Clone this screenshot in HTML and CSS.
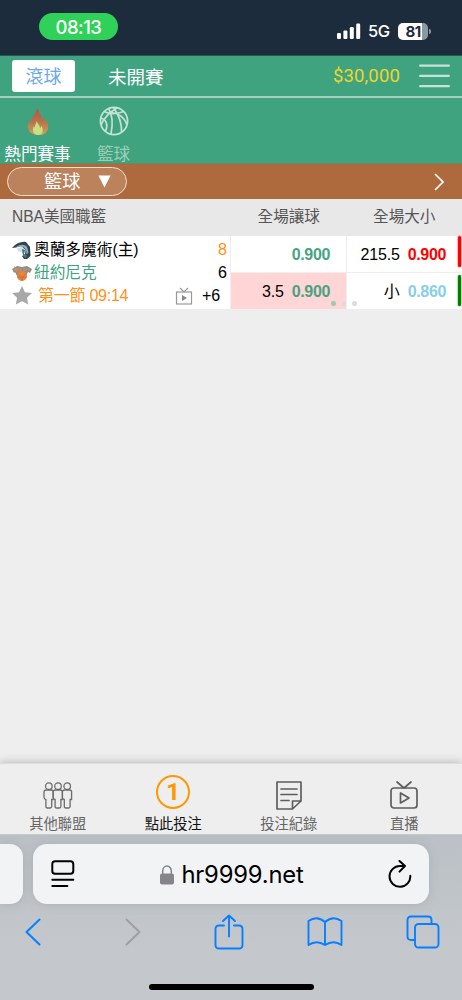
FILE: index.html
```html
<!DOCTYPE html>
<html lang="zh-Hant">
<head>
<meta charset="utf-8">
<meta name="viewport" content="width=device-width">
<title>滾球</title>
<link rel="stylesheet" href="styles.css">
</head>
<body>
<div class="phone">
  <div class="status">
    <div class="clock">08:13</div>
    <div class="status-right">
      <svg class="signal" viewBox="0 0 24 16" fill="#fff"><rect x="0" y="10" width="4" height="6" rx="1.2"/><rect x="6.4" y="7.4" width="4" height="8.6" rx="1.2"/><rect x="12.8" y="4" width="4" height="12" rx="1.2"/><rect x="19.2" y="0.5" width="4" height="15.5" rx="1.2"/></svg>
      <span class="network">5G</span>
      <div class="battery">81</div>
      <i class="battery-tip"></i>
    </div>
  </div>

  <header class="topbar">
    <div class="tab-live">滾球</div>
    <div class="tab-next">未開賽</div>
    <div class="balance">$30,000</div>
    <svg class="menu" viewBox="0 0 31 24" stroke="#c9e2d9" stroke-width="2.300" stroke-linecap="round"><path d="M1.200 1.700h28.600M1.200 11.900h28.600M1.200 22.200h28.600"/></svg>
  </header>

  <nav class="sports">
    <div class="sport sport-hot">
      <svg class="flame" viewBox="0 0 22 30">
        <defs>
          <linearGradient id="fire" x1="0" y1="0" x2="0" y2="1"><stop offset="0" stop-color="#b8503f"/><stop offset=".5" stop-color="#bb704a"/><stop offset="1" stop-color="#c6a45c"/></linearGradient>
        </defs>
        <path fill="url(#fire)" d="M10 0C11 4 14.500 7 14.500 13c1-1 1.800-2 2-3.500 1.500 2 1.500 4 1.700 6.500.9-.6 1.400-1.500 1.700-2.500C23 20 22 29 12 29 1 29-1.500 21 1.800 14.500c.4 1.200.9 1.800 1.600 2.200C3.400 10 10 8 10 0Z"/>
        <path fill="#c9df82" d="M9.500 14.500c.8 2.700 3.300 4 3.700 7.500l1.500-2.500C17 24 16 29 11.500 29 6 29 4.800 24.500 6.500 20l1 1.500c.2-3 1.700-4 2-7Z"/>
      </svg>
      <span>熱門賽事</span>
    </div>
    <div class="sport sport-ball">
      <svg class="ball" viewBox="0 0 30 30" fill="none" stroke="#c5e2d5" stroke-width="1.700"><circle cx="15" cy="15" r="13.600"/><path d="M9.500 2.500C13 8 14 18 12 28M14.500 1.500C19 8 23 17 22.500 26M5 5.500C12 9 18 8 25 5.500M18 2C11 6 5 12 2 19M12 6.500C20 7 26 12 28 19M1.800 12C8 14 9 19 6.500 25.500"/></svg>
      <span>籃球</span>
    </div>
  </nav>

  <div class="filter">
    <div class="select"><span>籃球</span><svg viewBox="0 0 14 14" fill="#fff"><path d="M.5.500h13L7 13.500Z"/></svg></div>
    <svg class="next" viewBox="0 0 10 18" fill="none" stroke="#fff" stroke-width="1.700"><path d="m1 1 8 8-8 8"/></svg>
  </div>

  <main class="content">
    <div class="league-head"><span class="league">NBA美國職籃</span><span class="market">全場讓球</span><span class="market">全場大小</span></div>
    <section class="match">
      <div class="teams">
        <div class="team">
          <svg class="logo" viewBox="0 0 20 18"><path fill="#33434d" d="M0 7C4 2 10 0 14 1l4 5 .5 9-3.500 3h-3l-2-3 3-1 .5-5-4.500-4L4 6.500Z"/><path fill="#8baebe" d="M4 6C8 3 14 3 15.500 7l1 5-2 1-.5-4C12 5 8 5 4 6Z"/><path fill="#d3dee4" d="m5 7 5-1 3 3-1 4-3-2-3-1Z"/><path fill="#47758c" d="m10 8 3 1-1 4 3 1-1 3-3-2Z"/></svg>
          <span class="name">奧蘭多魔術(主)</span><span class="score score-lead">8</span>
        </div>
        <div class="team">
          <svg class="logo" viewBox="0 0 20 18"><path fill="#80909a" d="M0 5 5 2l5 1 5-1 5 3-2 4-2-1-2 4H5L3 8 2 9Z"/><circle cx="10" cy="12" r="5" fill="#ed8438"/><path fill="none" stroke="#e5864a" stroke-width="1.300" d="M3 7V4l2 3V4m2 0v3m2-3v3m3-3v3m2-3v3m3-3v3"/><path fill="none" stroke="#b06b49" stroke-width=".6" d="M6 10q4 2 3 7m5-7q-4 2-4 7M5 13h10"/></svg>
          <span class="name name-away">紐約尼克</span><span class="score">6</span>
        </div>
        <div class="period">
          <svg class="star" viewBox="0 0 20 19" fill="#a9a9a9"><path d="m10 0 3 6.200 7 .9-5.100 4.700 1.300 6.800-6.200-3.300-6.200 3.300 1.300-6.800L0 7.100l7-.9Z"/></svg>
          <span class="time">第一節 09:14</span>
          <svg class="tv-small" viewBox="0 0 18 18" fill="none" stroke="#999" stroke-width="1.200"><rect x="1.500" y="5" width="15" height="12"/><path d="m5 1 4 4 4-4"/><path fill="#888" stroke="none" d="m7 8 5 3-5 3Z"/></svg>
          <span class="more">+6</span>
        </div>
      </div>
      <div class="odds">
        <div class="cell"><b class="odd">0.900</b></div>
        <div class="cell cell-hot"><span>3.5</span><b class="odd">0.900</b></div>
      </div>
      <div class="odds odds-total">
        <div class="cell"><span>215.5</span><b class="odd odd-up">0.900</b></div>
        <div class="cell"><span>小</span><b class="odd odd-down">0.860</b></div>
        <i class="edge edge-red"></i><i class="edge edge-green"></i>
      </div>
      <div class="dots"><i></i><i></i><i></i></div>
    </section>
  </main>

  <nav class="bottom-nav">
    <div class="nav-item">
      <svg class="icon-people" viewBox="0 0 30 28" fill="none" stroke="#6c6c6c" stroke-width="1.300"><g id="person"><circle cx="5.800" cy="4.200" r="3.300"/><path d="M3.200 8h5.200q1.800 0 1.800 2v7.500H8.700v7q0 1.500-1.500 1.500H4.400q-1.500 0-1.500-1.500v-7q-1.600-.3-1.900-2V10q.2-2 2.200-2Z"/></g><use href="#person" x="9.200"/><use href="#person" x="18.400"/></svg>
      <span>其他聯盟</span>
    </div>
    <div class="nav-item nav-active"><div class="bet-count">1</div><span>點此投注</span></div>
    <div class="nav-item">
      <svg class="icon-note" viewBox="0 0 26 30" fill="none" stroke="#5e5e5e" stroke-width="1.700" stroke-linecap="round" stroke-linejoin="round"><path d="M25 1H1v27h15.500l8.500-8ZM16.500 28v-8H25M5 8h16M5 13.500h16M5 19.500h8"/></svg>
      <span>投注紀錄</span>
    </div>
    <div class="nav-item">
      <svg class="icon-tv" viewBox="0 0 30 30" fill="none" stroke="#5e5e5e" stroke-width="1.700" stroke-linecap="round" stroke-linejoin="round"><rect x="2" y="8" width="26" height="20" rx="3"/><path d="m8 2 7 6 7-6M11.500 13v10l8.500-5Z"/></svg>
      <span>直播</span>
    </div>
  </nav>

  <footer class="browser">
    <div class="address-row">
      <div class="previous-tab"></div>
      <div class="address">
        <svg class="icon-page" viewBox="0 0 24 28" fill="none" stroke="#000" stroke-width="2" stroke-linecap="round"><rect x="1.300" y="1.300" width="21" height="12.500" rx="2.800"/><path d="M1.300 19.700h21M1.300 26h15"/></svg>
        <div class="domain"><svg class="icon-lock" viewBox="0 0 14 20"><rect y="8.500" width="14" height="11" rx="2" fill="#858489"/><path d="M2.700 10V6a4.300 5 0 0 1 8.600 0v4" fill="none" stroke="#858489" stroke-width="1.500"/></svg><span>hr9999.net</span></div>
        <svg class="icon-reload" viewBox="0 0 24 28" fill="none" stroke="#000" stroke-width="2" stroke-linecap="round" stroke-linejoin="round"><path d="M22.300 15.700A10.400 10.400 0 1 1 12 6h5M11.500.900 17 6l-5.500 5.600"/></svg>
      </div>
    </div>
    <div class="toolbar">
      <svg class="tool-back" viewBox="0 0 16 28" stroke-width="2"><path d="M14.500 1.500 1.500 14l13 12.500"/></svg>
      <svg class="tool-forward" viewBox="0 0 16 28" stroke-width="2"><path d="m1.500 1.500 13 12.500-13 12.500"/></svg>
      <svg class="tool-share" viewBox="0 0 30 36" stroke-width="1.900"><path d="M10 11.500H5q-3.500 0-3.500 3.500v16q0 3.500 3.500 3.500h20q3.500 0 3.500-3.500V15q0-3.500-3.500-3.500h-5M15 22.500v-21M9 7l6-5.500L21 7"/></svg>
      <svg class="tool-book" viewBox="0 0 36 30" stroke-width="1.900"><path d="M18 5Q10-2 1.500 4v24q8-5.500 16.500 0 8.500-5.500 16.500 0V4Q26-2 18 5v23"/></svg>
      <svg class="tool-tabs" viewBox="0 0 34 34" stroke-width="1.900"><path d="M9 25H5q-3.500 0-3.500-3.500V5Q1.500 1.500 5 1.500h17q3.500 0 3.500 3.500v4"/><rect x="9" y="9" width="23.500" height="23.500" rx="3.500"/></svg>
    </div>
    <div class="home-indicator"></div>
  </footer>
</div>
</body>
</html>
```

FILE: styles.css
```css
* { box-sizing: border-box; }
body { margin: 0; background: #eee; }
i { display: block; }
svg { display: block; flex: none; }
.phone {
  width: 462px; height: 1000px; overflow: hidden;
  display: flex; flex-direction: column;
  font-family: "Liberation Sans", "Noto Sans CJK TC", sans-serif;
  font-weight: 400; color: #000; white-space: nowrap;
}

.status { height: 56px; flex: none; background: #1c2c3c; display: flex; justify-content: space-between; padding: 13px 31px 0 39px; border-bottom: 1px solid #27584f; }
.clock { width: 79px; height: 27px; border-radius: 14px; background: #30d158; color: #fff; text-align: center; font: 500 18.500px/28px Inter, sans-serif; letter-spacing: -.5px; }
.status-right { height: 36px; display: flex; align-items: center; color: #fff; }
.signal { width: 24px; height: 16px; }
.network { font: 500 16.500px/20px Inter, sans-serif; letter-spacing: -.5px; width: 22px; margin-left: 7px; }
.battery { width: 30px; height: 17px; margin-left: 8px; border-radius: 5px; background: linear-gradient(90deg, #fff 80%, #8e969e 80%); color: #1c2c3c; text-align: center; font: 700 15px/17px Inter, sans-serif; letter-spacing: -.5px; }
.battery-tip { width: 2px; height: 5px; margin-left: 1px; background: #8e969e; border-radius: 0 2px 2px 0; }

.topbar { height: 42px; flex: none; background: #40a380; border-bottom: 2px solid #a6cdbd; display: flex; padding: 4px 12px 0; color: #fff; font-size: 18.500px; }
.tab-live { width: 63px; height: 32px; background: #fff; border-radius: 3px; color: #6faae6; text-align: center; line-height: 34px; font-size: 18px; }
.tab-next { margin-left: 33px; line-height: 35px; }
.balance { margin-left: auto; color: #ecd52b; font: 400 18.500px/33px Roboto, "Liberation Sans", sans-serif; letter-spacing: .15px; }
.menu { width: 31px; height: 24px; margin: 4px 0 0 19px; }

.sports { height: 66px; flex: none; background: #40a380; display: flex; border-bottom: 1px solid #668b60; font-size: 16.600px; }
.sport { display: flex; flex-direction: column; align-items: center; line-height: 24px; }
.sport-hot { width: 75px; color: #fff; padding-top: 9px; }
.sport-ball { width: 77px; color: #9bceba; padding-top: 8px; }
.flame { width: 22px; height: 29px; margin-bottom: 7px; }
.ball { width: 30px; height: 30px; margin-bottom: 7px; }

.filter { height: 35px; flex: none; background: #ae6a3c; display: flex; justify-content: space-between; padding: 3px 18px 0 7px; }
.select { width: 120px; height: 29px; border: 1.400px solid #f0dfd4; border-radius: 15px; background: #bb825b; color: #fff; display: flex; align-items: center; padding: 0 15px 0 36px; justify-content: space-between; font-size: 18.200px; line-height: 26px; }
.select svg { width: 13px; height: 13px; }
.next { width: 10px; height: 18px; margin-top: 6px; }

.content { flex: 1; background: #eee; }
.league-head { height: 37px; background: #e8e8e8; display: flex; color: #555; font-size: 15.600px; line-height: 36px; }
.league { width: 231px; padding-left: 12px; letter-spacing: -.05px; }
.market { width: 115.500px; text-align: center; }
.match { height: 73px; display: flex; position: relative; background: #eee; font-size: 16px; }
.teams { width: 230px; height: 73px; background: #fff; padding: 2px 3px 0 12px; }
.team { height: 23px; display: flex; align-items: center; line-height: 23px; }
.team + .team { height: 22px; }
.logo { width: 20px; height: 18px; margin-top: 1px; }
.name { font-size: 15.700px; margin-left: 2px; }
.name-away { color: #40a380; }
.score { margin-left: auto; }
.score-lead { color: #ff9216; }
.period { height: 25px; display: flex; align-items: center; line-height: 23px; }
.star { width: 20px; height: 19px; }
.time { margin-left: 6px; color: #ff9216; font-size: 16px; letter-spacing: -.25px; }
.tv-small { width: 18px; height: 18px; margin-left: auto; }
.more { width: 20px; margin: 0 5px 0 9px; font-size: 16px; }
.odds { width: 115px; margin-left: 1px; display: grid; grid-template-rows: 36px 36px; gap: 1px; }
.odds-total { position: relative; }
.cell { background: #fff; display: flex; justify-content: flex-end; gap: 8px; padding-right: 16px; line-height: 37px; height: 36px; font-size: 16px; letter-spacing: -.15px; }
.cell-hot { background: #ffd5d5; }
.odd { color: #47a382; font-size: 16px; letter-spacing: -.35px; }
.odd-up { color: #f00; }
.odd-down { color: #87ceeb; }
.edge { position: absolute; right: 1px; width: 3px; height: 31px; border-radius: 2px; }
.edge-red { top: 0; background: #f00; box-shadow: 0 0 2px #f00; }
.edge-green { top: 39px; background: #008000; box-shadow: 0 0 2px #008000; }
.dots { position: absolute; left: 331px; top: 65px; display: flex; gap: 6px; }
.dots i { width: 4.500px; height: 4.500px; border-radius: 50%; background: #dcdcdc; }
.dots i:first-child { background: #99cbb9; }

.bottom-nav { height: 72px; flex: none; background: #eee; border-top: 1px solid #ddd; border-bottom: 1px solid #c5c7c8; box-shadow: 0 -1px 8px #bbb; display: grid; grid-template-columns: repeat(4, 115.500px); color: #666; z-index: 1; }
.nav-item { display: flex; flex-direction: column; align-items: center; justify-content: flex-end; font-size: 14.300px; line-height: 20px; }
.nav-active { color: #111; }
.bet-count { width: 34px; height: 34px; border: 2px solid #ff9800; border-radius: 50%; color: #ff9800; font: 700 24px/31px Roboto, sans-serif; text-align: center; margin-bottom: 5px; }
.icon-people { width: 30px; height: 28px; margin-bottom: 4px; }
.icon-note { width: 26px; height: 30px; margin-bottom: 3px; }
.icon-tv { width: 30px; height: 30px; margin-bottom: 4px; }

.browser { height: 165px; flex: none; background: linear-gradient(#bac0c5, #c4c8cc 70%); padding-top: 9px; position: relative; z-index: 2; }
.address-row { display: flex; gap: 10px; }
.previous-tab { width: 23px; height: 60px; background: #f2f3f5; border-radius: 0 13px 13px 0; box-shadow: 0 1px 10px #8f999d66; }
.address { width: 396px; height: 60px; background: #f2f3f5; border-radius: 14px; display: flex; align-items: center; justify-content: space-between; padding: 0 17px 0 18px; box-shadow: 0 1px 10px #8f999d66; }
.icon-page { width: 24px; height: 28px; }
.domain { display: flex; align-items: center; gap: 7px; margin: 2px 0 0 1px; font: 400 23.800px/30px Inter, sans-serif; letter-spacing: -.2px; }
.icon-lock { width: 14px; height: 20px; }
.icon-reload { width: 24px; height: 28px; }
.toolbar { height: 56px; display: grid; align-items: center; grid-template-columns: 100px 89px 93px 99px 34px; padding-left: 25px; }
.toolbar svg { fill: none; stroke: #087fff; stroke-linecap: round; stroke-linejoin: round; }
.tool-back { width: 16px; height: 28px; }
.toolbar .tool-forward { width: 16px; height: 28px; stroke: #9ca0a4; }
.tool-share { width: 30px; height: 36px; }
.tool-book { width: 36px; height: 30px; }
.tool-tabs { width: 34px; height: 34px; }
.home-indicator { width: 165px; height: 6px; background: #000; border-radius: 3px; margin: 24px auto 0; }
```
